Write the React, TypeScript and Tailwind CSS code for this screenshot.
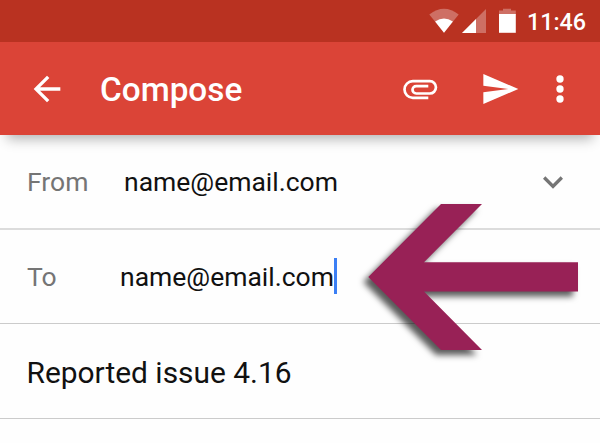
import React from "react";

function StatusBar() {
  return (
    <div className="flex h-[42px] items-start bg-[#b93221] pl-[429px] text-white">
      <svg className="mt-[8px] h-[26px] w-[30px] shrink-0" viewBox="0 0 30 26" fill="currentColor">
        <path opacity=".3" d="M0.3 6.4Q15-4.8 29.7 6.4L15 24.8Z" />
        <path d="M6.1 13.6Q15 7.3 23.9 13.6L15 24.8Z" />
      </svg>
      <svg className="mt-[8px] ml-[2px] h-[26px] w-[26px] shrink-0" viewBox="0 0 26 26" fill="currentColor">
        <path opacity=".3" d="M25 1V25H1Z" />
        <path d="M15 11V25H1Z" />
      </svg>
      <svg className="mt-[8px] ml-[10px] h-[26px] w-[19px] shrink-0" viewBox="0 0 19 26" fill="currentColor">
        <path opacity=".3" d="M6 .7H14V2.6H18.8V7H2V2.6H6Z" />
        <path d="M2 6H18.8V24.8H2Z" />
      </svg>
      <span className="ml-[11px] mt-[6px] text-[23.3px] leading-[32px] font-medium">11:46</span>
    </div>
  );
}

function Toolbar() {
  return (
    <div className="relative flex h-[93px] items-center bg-[#db4437] pl-[26.5px] text-white shadow-[0_11px_12px_-7px_rgba(0,0,0,0.3)]">
      <svg className="h-10 w-10 shrink-0" viewBox="0 0 24 24" fill="currentColor">
        <path d="M20 11H7.83l5.59-5.59L12 4l-8 8 8 8 1.41-1.41L7.83 13H20v-2z" />
      </svg>
      <h1 className="ml-[33.5px] w-[300px] pt-[3px] text-[33.3px] leading-[40px] font-medium">Compose</h1>
      <svg className="h-10 w-10 shrink-0" viewBox="0 0 40 40" fill="none" stroke="currentColor" strokeWidth="2.7">
        <path d="M28.3 28.8H12.8A8.3 8.3 0 0 1 12.8 12.2H29.8A6.15 6.15 0 0 1 29.8 24.5H16.2A3.7 3.7 0 0 1 16.2 17.1H28.3" />
      </svg>
      <svg className="ml-[39.5px] h-10 w-10 shrink-0" viewBox="0 0 24 24" fill="currentColor">
        <path d="M2.01 21L23 12 2.01 3 2 10l15 2-15 2z" />
      </svg>
      <svg className="ml-[20.5px] h-10 w-10 shrink-0" viewBox="0 0 24 24" fill="currentColor">
        <circle cx="12" cy="6" r="2.2" />
        <circle cx="12" cy="12" r="2.2" />
        <circle cx="12" cy="18" r="2.2" />
      </svg>
    </div>
  );
}

function PointerArrow() {
  return (
    <svg className="absolute left-[350px] top-[190px] h-[180px] w-[250px] overflow-visible" viewBox="350 190 250 180">
      <path
        className="drop-shadow-[-5px_5px_3px_rgba(0,0,0,0.65)]"
        fill="#982156"
        d="M368.3 277L441 204H482L424 262.2H578V291.6H424L482 350H441Z"
      />
    </svg>
  );
}

export default function App() {
  return (
    <div className="relative h-[443px] w-[600px] overflow-hidden bg-[#fefefe] font-['Roboto',sans-serif] text-[#111]">
      <StatusBar />
      <Toolbar />
      <div className="flex h-[95px] items-center border-b-2 border-[#dcdcdc] pl-[27px] text-[26.5px]">
        <span className="w-[97px] text-[#757575]">From</span>
        <span className="w-[409px]">name@email.com</span>
        <svg className="h-10 w-10 shrink-0" viewBox="0 0 24 24" fill="#757575">
          <path d="M16.59 8.59L12 13.17 7.41 8.59 6 10l6 6 6-6z" />
        </svg>
      </div>
      <div className="flex h-[94px] items-center border-b border-[#cbcbcb] pl-[27px] text-[26.5px]">
        <span className="w-[93px] text-[#757575]">To</span>
        <span className="w-[214px]">name@email.com</span>
        <span className="mb-[2px] h-9 w-[3px] bg-[#3b7ff5]" />
      </div>
      <div className="flex h-[95px] items-center border-b border-[#cbcbcb] pl-[26.5px] pt-[5px] text-[29.9px]">Reported issue 4.16</div>
      <PointerArrow />
    </div>
  );
}
